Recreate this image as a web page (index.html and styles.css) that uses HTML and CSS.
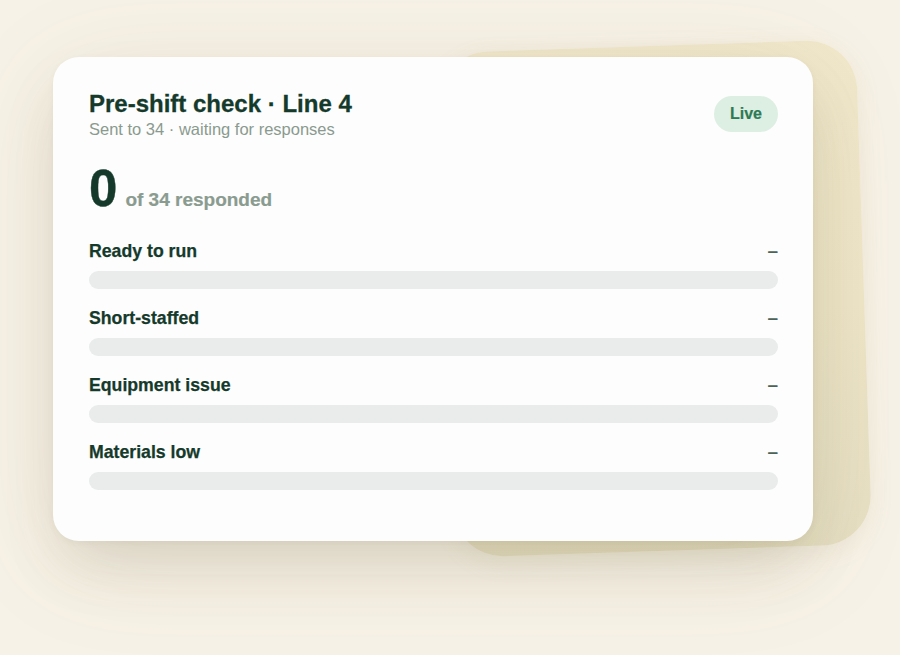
FILE: index.html
```html
<!DOCTYPE html>
<html lang="en">
<head>
  <meta charset="UTF-8" />
  <title>Pre-shift check</title>
  <meta name="viewport" content="width=device-width, initial-scale=1.0" />
  <link rel="stylesheet" href="styles.css">
</head>
<body>

  <div class="stage">
    <!-- tilted sheet sitting behind the card -->
    <div class="back-sheet"></div>

    <div class="card">
      <div class="card-head">
        <div>
          <h1 class="title">Pre-shift check · Line 4</h1>
          <div class="subtitle">Sent to 34 · waiting for responses</div>
        </div>
        <span class="pill">Live</span>
      </div>

      <div class="tally">
        <span class="tally-num">0</span>
        <span class="tally-text">of 34 responded</span>
      </div>

      <div class="options">
        <div class="option">
          <div class="option-row"><span class="option-name">Ready to run</span><span class="option-count">–</span></div>
          <div class="bar"></div>
        </div>
        <div class="option">
          <div class="option-row"><span class="option-name">Short-staffed</span><span class="option-count">–</span></div>
          <div class="bar"></div>
        </div>
        <div class="option">
          <div class="option-row"><span class="option-name">Equipment issue</span><span class="option-count">–</span></div>
          <div class="bar"></div>
        </div>
        <div class="option">
          <div class="option-row"><span class="option-name">Materials low</span><span class="option-count">–</span></div>
          <div class="bar"></div>
        </div>
      </div>
    </div>
  </div>

</body>
</html>
```

FILE: styles.css
```css
* { margin: 0; padding: 0; box-sizing: border-box; }

body {
  font-family: "Liberation Sans", Arial, sans-serif;
  background: #f7f2e7;
  color: #153a2b;
  overflow: hidden;
}

.stage {
  position: relative;
  padding: 57px 0 0 53px;
  height: 655px;
}

.back-sheet {
  position: absolute;
  left: 446px;
  top: 46px;
  width: 418px;
  height: 505px;
  border-radius: 50px;
  background: linear-gradient(175deg, #f1e8cc 0%, #eee5c8 55%, #e6dfc3 100%);
  box-shadow: 0 6px 24px rgba(170, 150, 90, 0.10);
  transform: rotate(-1.9deg);
}

.card {
  position: relative;
  width: 760px;
  padding: 33px 35px 51px 36px;
  background: #fdfdfd;
  border-radius: 26px;
  box-shadow:
    0 2px 6px rgba(90, 80, 40, 0.05),
    0 30px 60px -10px rgba(90, 80, 40, 0.15),
    0 20px 110px rgba(120, 100, 50, 0.10);
}

.card-head {
  display: flex;
  justify-content: space-between;
  align-items: flex-start;
}

.title {
  font-size: 24px;
  line-height: 28px;
  font-weight: bold;
  color: #153a2b;
  -webkit-text-stroke: 0.3px #153a2b;
}

.subtitle {
  margin-top: 1px;
  font-size: 16.5px;
  line-height: 20px;
  color: #8a9a8f;
}

.pill {
  margin-top: 6px;
  height: 36px;
  padding: 0 16px;
  border-radius: 18px;
  background: #dcefe2;
  color: #2e7a54;
  font-size: 16px;
  font-weight: bold;
  line-height: 36px;
  -webkit-text-stroke: 0.2px #2e7a54;
}

.tally {
  display: flex;
  align-items: baseline;
  margin-top: 25px;
}

.tally-num {
  font-size: 51px;
  line-height: 50px;
  font-weight: bold;
  color: #153a2b;
  -webkit-text-stroke: 0.4px #153a2b;
}

.tally-text {
  margin-left: 8px;
  font-size: 19px;
  font-weight: bold;
  color: #8a9b90;
  -webkit-text-stroke: 0.2px #8a9b90;
}

.options {
  display: flex;
  flex-direction: column;
  gap: 19px;
  margin-top: 27px;
}

.option-row {
  display: flex;
  justify-content: space-between;
  align-items: center;
  height: 20px;
  margin-bottom: 10px;
}

.option-name {
  font-size: 17.7px;
  font-weight: bold;
  color: #153a2b;
  -webkit-text-stroke: 0.25px #153a2b;
}

.option-count {
  font-size: 19px;
  font-weight: bold;
  color: #4b6457;
}

.bar {
  height: 18px;
  border-radius: 9px;
  background: #e9ecea;
}
```
